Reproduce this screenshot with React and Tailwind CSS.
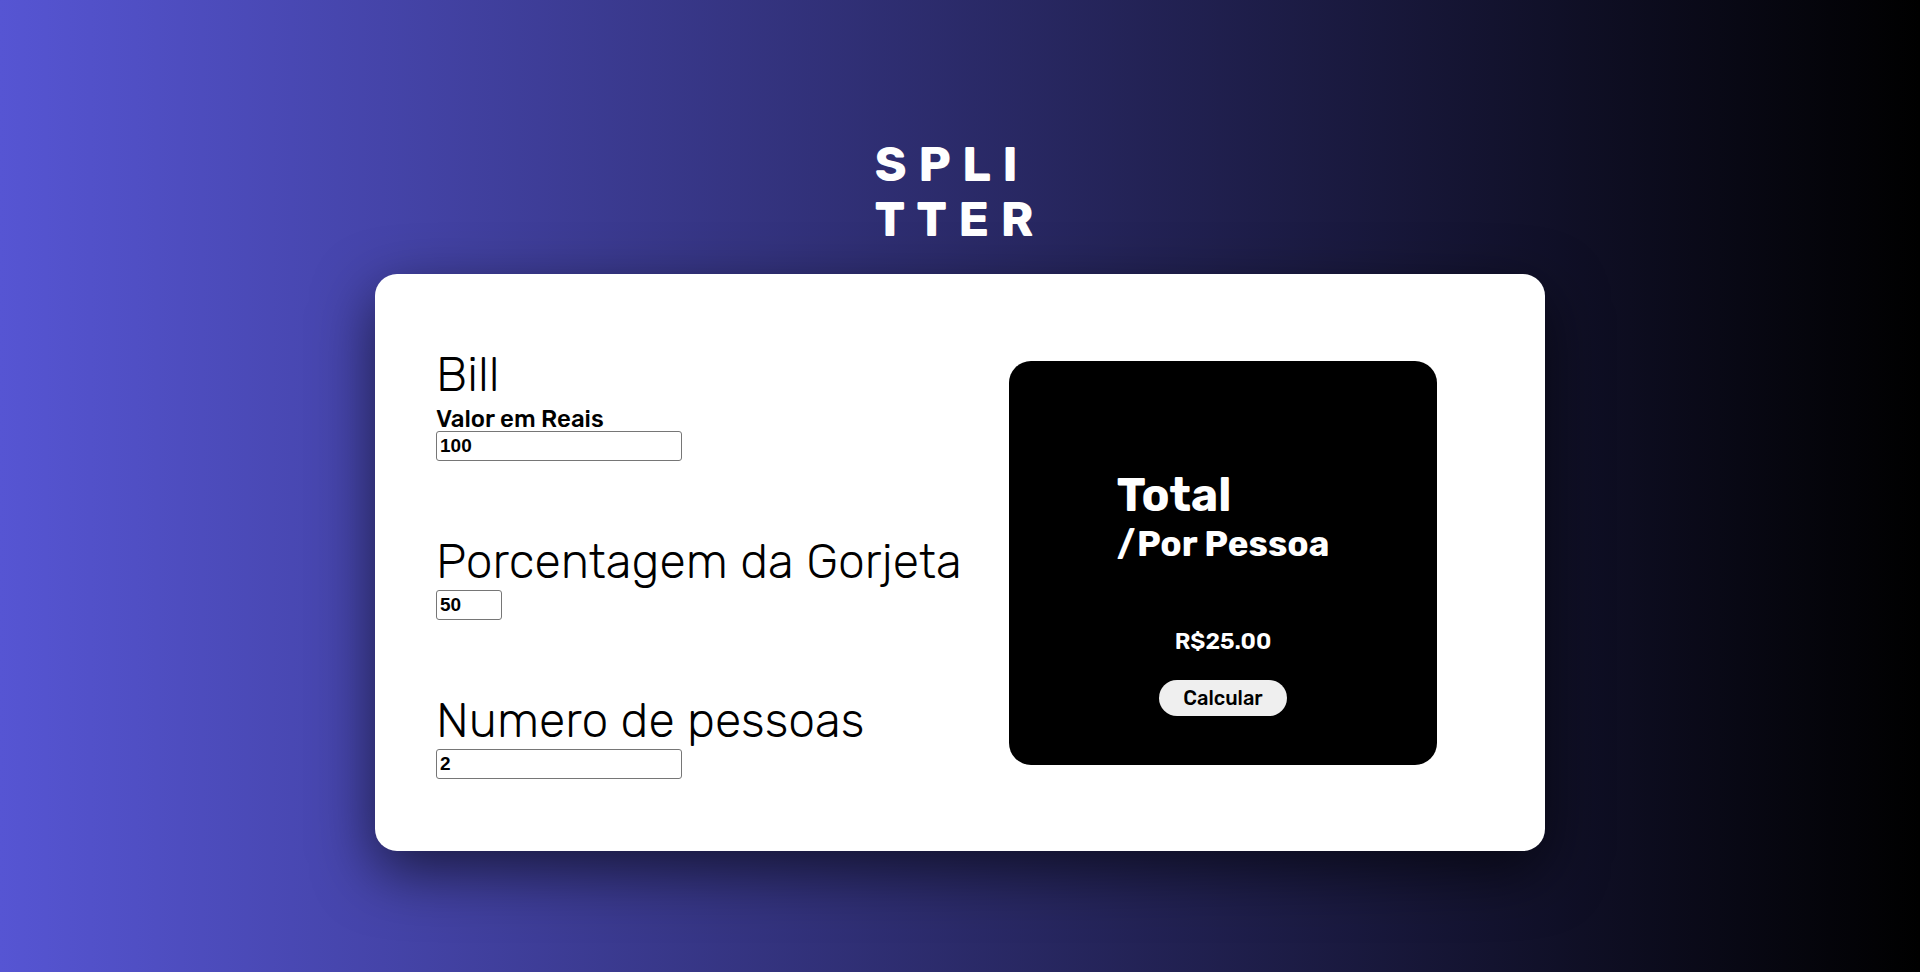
import React, { useState } from 'react';

const font = "font-['Rubik','Inter','Noto_Sans',sans-serif]";

const Field = ({ title, label, value, onChange, width, className = '' }) => (
  <div className={`flex flex-col ${className}`}>
    <h2 className="text-[48px] leading-[56px] font-light text-black">{title}</h2>
    {label && <label className="text-[24px] leading-[24px] font-medium text-black mt-[4px]">{label}</label>}
    <input
      type="number"
      value={value}
      onChange={(e) => onChange(e.target.value)}
      className={`${width} h-[30px] border border-[#767676] rounded-[3px] bg-white px-[3px] text-[19px] font-bold text-black font-['Liberation_Sans',Arial,sans-serif] outline-none`}
    />
  </div>
);

const App = () => {
  const [bill, setBill] = useState('100');
  const [tip, setTip] = useState('50');
  const [people, setPeople] = useState('2');
  const [result, setResult] = useState(25);

  const calcular = () => {
    const b = parseFloat(bill) || 0;
    const t = parseFloat(tip) || 0;
    const p = parseFloat(people) || 1;
    setResult((b * (1 + t / 100)) / p);
  };

  return (
    <div className={`min-h-screen w-full bg-[linear-gradient(to_right,#5655d3,#000)] flex flex-col items-center ${font}`}>
      {/* Logo */}
      <h1 className="mt-[137px] text-[48px] leading-[55px] font-bold text-white tracking-[0.24em]">
        SPLI<br />TTER
      </h1>

      {/* Card */}
      <div className="mt-[27px] w-[1170px] h-[577px] bg-white rounded-[22px] shadow-[0_20px_60px_rgba(0,0,0,0.6)] flex items-center justify-between pl-[61px] pr-[108px]">
        <div className="flex flex-col">
          <Field title="Bill" label="Valor em Reais" value={bill} onChange={setBill} width="w-[246px]" />
          <Field title="Porcentagem da Gorjeta" value={tip} onChange={setTip} width="w-[66px]" className="mt-[73px]" />
          <Field title="Numero de pessoas" value={people} onChange={setPeople} width="w-[246px]" className="mt-[73px]" />
        </div>

        <div className="w-[428px] h-[404px] bg-black rounded-[22px] flex flex-col items-center pt-[110px]">
          <div className="flex flex-col text-white font-bold">
            <span className="text-[46px] leading-[50px]">Total</span>
            <span className="text-[35px] leading-[46px]">/Por Pessoa</span>
          </div>
          <p className="mt-[60px] text-white font-semibold text-[23px] leading-[28px]">R${result.toFixed(2)}</p>
          <button
            onClick={calcular}
            className="mt-[25px] w-[128px] h-[36px] rounded-full bg-[#efefef] text-black font-medium text-[20px]"
          >
            Calcular
          </button>
        </div>
      </div>
    </div>
  );
};

export default App;
